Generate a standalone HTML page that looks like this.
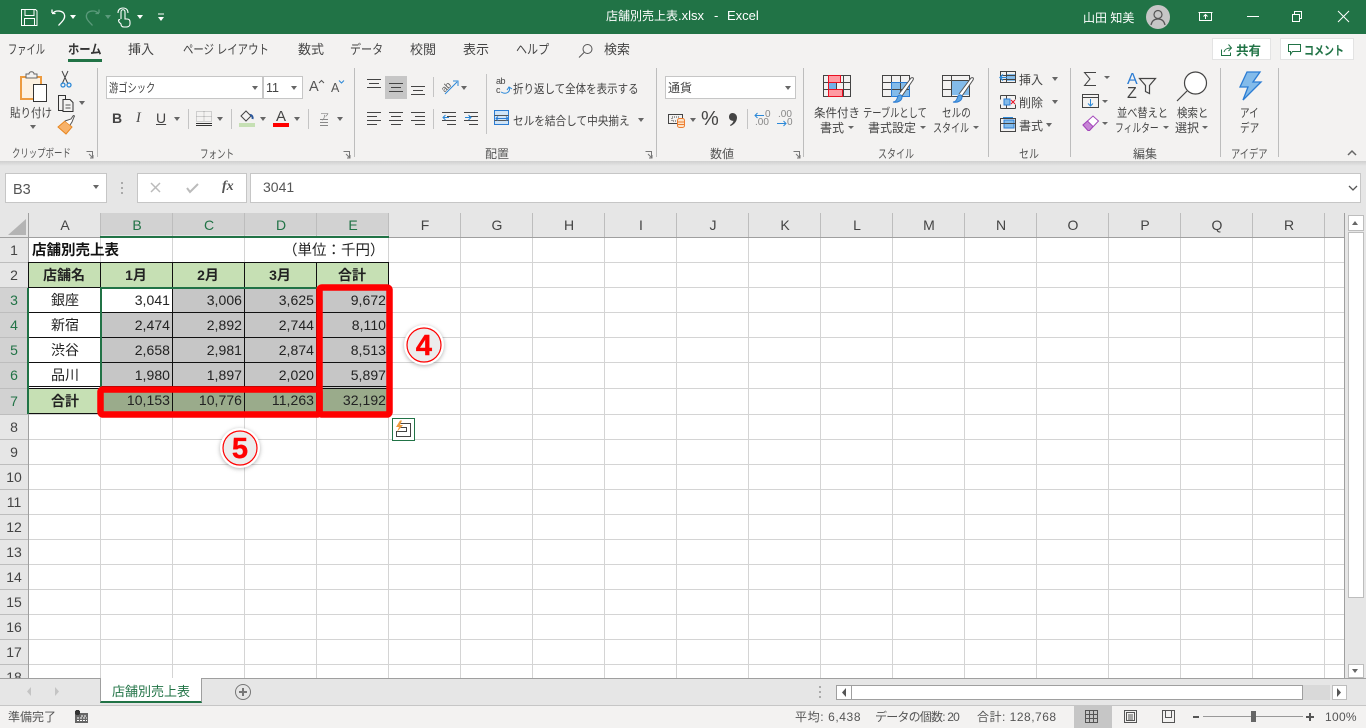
<!DOCTYPE html>
<html lang="ja"><head><meta charset="utf-8"><title>店舗別売上表.xlsx - Excel</title>
<style>
html,body{margin:0;padding:0;width:1366px;height:728px;overflow:hidden;background:#fff}
body{position:relative;font-family:"Liberation Sans","Noto Sans CJK JP",sans-serif;color:#444}
.t{position:absolute;white-space:nowrap;line-height:16px;font-size:12px;color:#444;transform-origin:0 50%}
.b{position:absolute}
svg{position:absolute;overflow:visible}
.tab{font-size:13px;top:42px;color:#444}
.g{font-size:12px;top:146px;color:#555}
.r{font-size:12px;color:#444}
.ch{font-size:14px;top:217px;width:72px;text-align:center;color:#444}
.rh{font-size:14px;left:0;width:28px;text-align:center;color:#444}
.sel{color:#217346}
.n{font-size:14px;color:#222;width:60px;text-align:right;letter-spacing:.05px}
.c{font-size:14px;color:#222;width:72px;text-align:center}
.bd{font-weight:700}
.tri{position:absolute;width:0;height:0;border-left:3.5px solid transparent;border-right:3.5px solid transparent;border-top:4px solid #666}
</style></head><body>
<!-- title bar -->
<div class="b" style="left:0;top:0;width:1366px;height:34px;background:#217346"></div>
<svg style="left:0;top:0" width="1366" height="34" fill="none" stroke="#fff" stroke-width="1">
<path d="M21.500 9.500h14l1.500 1.500v14.500h-15.500zM25 9.500v6h9v-6M24.500 25.500v-7h10v7"/>
<path d="M52 13v-3.500M52 13.500h3.500M52.500 13.500c3-4 11-3 12 1.500 1 4-3 7-6 10.500" stroke-width="1.300"/>
<path d="M99 13v-3.500M99 13.500h-3.500M98.500 13.500c-3-4-11-3-12 1.500-1 4 3 7 6 10.500" stroke="#5b9a7b" stroke-width="1.300"/>
<path d="M121 19V12c0-3 4-3 4 0v7h2c2 0 3 1 3 3v2c0 2-2 3-4 3h-2c-2 0-3-1-3-3l-2-2c-1-2 0-3 1-2M118 13c0-4 3-5 5-5s5 1 5 5" stroke-width="1.100"/>
<path d="M158 14h6" stroke-width="1"/>
</svg>
<div class="tri" style="left:70px;top:15px;border-top-color:#fff"></div>
<div class="tri" style="left:105px;top:15px;border-top-color:#5b9a7b"></div>
<div class="tri" style="left:137px;top:15px;border-top-color:#fff"></div>
<div class="tri" style="left:158px;top:17px;border-top-color:#fff"></div>
<div class="t" style="left:606px;top:8px;font-size:12px;color:#fff">店舗別売上表<span style="font-size:13px">.xlsx</span></div>
<div class="t" style="left:714px;top:8px;font-size:13px;color:#fff">-</div>
<div class="t" style="left:727px;top:8px;font-size:13px;color:#fff">Excel</div>
<div class="t" style="left:1083px;top:10px;font-size:12px;color:#fff">山田 知美</div>
<svg style="left:1146px;top:5px" width="24" height="24"><circle cx="12" cy="12" r="12" fill="#c6c6c6"/><circle cx="12" cy="9.500" r="4" fill="none" stroke="#555" stroke-width="1.200"/><path d="M5 20c1-5 4-6 7-6s6 1 7 6" fill="none" stroke="#555" stroke-width="1.200"/></svg>
<svg style="left:0;top:0" width="1366" height="34" fill="none" stroke="#fff" stroke-width="1">
<path d="M1199.500 12.500h12v8h-12zM1198.500 12.500h14M1205.500 19v-4M1203.500 16.500l2-2 2 2"/>
<path d="M1247 16.500h12"/>
<path d="M1292.500 14.500h7v7h-7zM1294.500 14v-2.500h7v7h-2"/>
<path d="M1338 11l11 11M1349 11l-11 11"/>
</svg>
<!-- ribbon -->
<div class="b" style="left:0;top:34px;width:1366px;height:127px;background:#f3f2f1"></div>
<div class="b" style="left:0;top:161px;width:1366px;height:52px;background:#e6e6e6"></div>
<div class="b" style="left:0;top:161px;width:1366px;height:5px;background:linear-gradient(#cfcfcf,#e6e6e6)"></div>
<div class="t tab" style="left:8px;transform:scaleX(.71)">ファイル</div>
<div class="t tab bd" style="left:68px;color:#333;transform:scaleX(.87)">ホーム</div>
<div class="b" style="left:68px;top:59px;width:34px;height:3px;background:#217346"></div>
<div class="t tab" style="left:128px">挿入</div>
<div class="t tab" style="left:183px;transform:scaleX(.8)">ページ レイアウト</div>
<div class="t tab" style="left:298px">数式</div>
<div class="t tab" style="left:350px;transform:scaleX(.85)">データ</div>
<div class="t tab" style="left:410px">校閲</div>
<div class="t tab" style="left:463px">表示</div>
<div class="t tab" style="left:516px;transform:scaleX(.85)">ヘルプ</div>
<svg style="left:578px;top:43px" width="16" height="16" fill="none" stroke="#555"><circle cx="9.500" cy="6" r="4.500"/><path d="M6 9.500L1 14.500"/></svg>
<div class="t tab" style="left:604px">検索</div>
<!-- share/comment -->
<div class="b" style="left:1212px;top:38px;width:59px;height:22px;background:#fff;border:1px solid #e3e3e3;box-sizing:border-box"></div>
<svg style="left:1218px;top:42px" width="16" height="16" fill="none" stroke="#217346"><path d="M3.500 7.500v6h9v-3M6 10c1-3 3-4 7-4M10.500 2.500l3 3.500-3 3"/></svg>
<div class="t bd" style="left:1236px;top:43px;font-size:12.500px;color:#217346">共有</div>
<div class="b" style="left:1280px;top:38px;width:74px;height:22px;background:#fff;border:1px solid #e3e3e3;box-sizing:border-box"></div>
<svg style="left:1288px;top:43px" width="14" height="14" fill="none" stroke="#217346"><path d="M.5 1.500h12v7h-8l-2 3v-3h-2z"/></svg>
<div class="t bd" style="left:1304px;top:43px;font-size:12.500px;color:#217346;transform:scaleX(.8)">コメント</div>
<!-- group separators -->
<svg style="left:0;top:0" width="1366" height="165" stroke="#c4c4c4" shape-rendering="crispEdges">
<path d="M97.500 68v89M354.500 68v89M656.500 68v89M803.500 68v89M988.500 68v89M1070.500 68v89M1220.500 68v89M1278.500 68v89" stroke="#bdbdbd"/>
<path d="M188.500 109v20M231.500 109v20M308.500 109v20M433.500 77v20M433.500 109v20M486.500 74v60M747.500 109v20"/>
</svg>
<!-- clipboard -->
<svg style="left:15px;top:70px" width="34" height="36">
<path d="M6 7h20v22H6z" fill="#fdf1e0" stroke="#ed9b3f" stroke-width="2"/>
<path d="M11 8V4h3c0-3 5-3 5 0h3v4z" fill="#f3f2f1" stroke="#666"/>
<path d="M18.500 14.500h13v17h-13z" fill="#fff" stroke="#333"/>
</svg>
<div class="t r" style="left:10px;top:105px;transform:scaleX(.875)">貼り付け</div>
<div class="tri" style="left:30px;top:125px"></div>
<svg style="left:58px;top:70px" width="40" height="68" fill="none">
<path d="M4 1l6 13M10 1L4 14" stroke="#444"/><circle cx="5" cy="15" r="2" stroke="#2b88d8" stroke-width="1.300"/><circle cx="11" cy="15" r="2" stroke="#2b88d8" stroke-width="1.300"/>
<path d="M.5 25.500h7v15h-7z" stroke="#333"/><path d="M5 29.500h7l3 3v9H5z" fill="#f3f2f1" stroke="#333"/><path d="M7.500 35h5M7.500 38h5" stroke="#555"/>
<path d="M0 57l7-6 7 6-6 7z" fill="#f7b26a" stroke="#e8861f"/><path d="M7 51l6-2 2-3c1-1 2 0 1 1l-2 5-2 3" fill="#fff" stroke="#555"/>
</svg>
<div class="tri" style="left:79px;top:101px"></div>
<div class="t g" style="left:12px;font-size:11.500px;transform:scaleX(.73)">クリップボード</div>
<svg style="left:86px;top:151px" width="8" height="8" fill="none" stroke="#777"><path d="M.5.500h6v6M3 3l4 4M4 7h3V4"/></svg>
<!-- font -->
<div class="b" style="left:106px;top:76px;width:157px;height:23px;background:#fff;border:1px solid #c6c6c6;box-sizing:border-box"></div>
<div class="t" style="left:109px;top:80px;font-size:12px;color:#444;transform:scaleX(.77)">游ゴシック</div>
<div class="tri" style="left:252px;top:86px"></div>
<div class="b" style="left:263px;top:76px;width:40px;height:23px;background:#fff;border:1px solid #c6c6c6;box-sizing:border-box"></div>
<div class="t" style="left:266px;top:80px;font-size:12.500px;color:#444">11</div>
<div class="tri" style="left:291px;top:86px"></div>
<div class="t" style="left:309px;top:79px;font-size:14.500px;color:#555">A</div>
<div class="t" style="left:331px;top:80px;font-size:12.500px;color:#555">A</div>
<svg style="left:317px;top:79px" width="27" height="6" fill="none" stroke-width="1"><path d="M2 4l2.500-2.500L7 4" stroke="#555"/><path d="M22 1.500l2.500 2.500L27 1.500" stroke="#2b88d8"/></svg>
<div class="t bd" style="left:112px;top:110px;font-size:14px;color:#444">B</div>
<div class="t" style="left:136px;top:110px;font-size:14.500px;font-style:italic;font-family:'Liberation Serif',serif;color:#444">I</div>
<div class="t" style="left:156px;top:110px;font-size:14px;color:#444;text-decoration:underline">U</div>
<div class="tri" style="left:174px;top:117px"></div>
<svg style="left:196px;top:111px" width="17" height="17" fill="none" shape-rendering="crispEdges"><path d="M.5.500h15v10H.5zM8 .5v10M.5 5.500h15" stroke="#aaa" stroke-dasharray="1 1"/><path d="M0 12.500h16" stroke="#333"/><path d="M0 14.500h16" stroke="#333"/></svg>
<div class="tri" style="left:217px;top:117px"></div>
<svg style="left:239px;top:109px" width="17" height="19"><path d="M2 7l5-5 5 5-5 5z" fill="#f3f2f1" stroke="#444"/><path d="M11 6c2 0 3 2 2.500 4" stroke="#2b579a" stroke-width="2" fill="none"/><rect y="14" width="16" height="4" fill="#c6e0b4"/></svg>
<div class="tri" style="left:260px;top:117px"></div>
<div class="t" style="left:276px;top:109px;font-size:15px;color:#444">A</div>
<div class="b" style="left:273px;top:123px;width:16px;height:4px;background:#f00"></div>
<div class="tri" style="left:294px;top:117px"></div>
<div class="t" style="left:320px;top:109px;font-size:9px;color:#888">ア</div>
<svg style="left:319px;top:119px" width="12" height="9" stroke="#888" fill="none"><path d="M1 .5h8M1 3.500h8M1 6.500h8" stroke-width="1"/></svg>
<div class="tri" style="left:337px;top:117px"></div>
<div class="t g" style="left:200px;transform:scaleX(.71)">フォント</div>
<svg style="left:343px;top:151px" width="8" height="8" fill="none" stroke="#777"><path d="M.5.500h6v6M3 3l4 4M4 7h3V4"/></svg>
<!-- alignment -->
<div class="b" style="left:385px;top:76px;width:22px;height:23px;background:#c6c6c6"></div>
<svg style="left:360px;top:70px" width="130" height="60" fill="none" stroke="#444" shape-rendering="crispEdges">
<path d="M7 9.500h14M9 13.500h10M7 17.500h14"/>
<path d="M29 13.500h14M31 17.500h10M29 21.500h14"/>
<path d="M51 16.500h14M53 20.500h10M51 24.500h14"/>
<path d="M7 42.500h14M7 46.500h10M7 50.500h14M7 54.500h10"/>
<path d="M29 42.500h14M31 46.500h10M29 50.500h14M31 54.500h10"/>
<path d="M51 42.500h14M55 46.500h10M51 50.500h14M55 54.500h10"/>
<path d="M82 42.500h14M87 46.500h9M82 50.500h14M87 54.500h9"/>
<path d="M104 42.500h14M109 46.500h9M104 50.500h14M109 54.500h9"/>
</svg>
<div class="t" style="left:441px;top:79px;font-size:9px;color:#555;transform:rotate(-45deg);transform-origin:50% 50%">ab</div>
<svg style="left:440px;top:78px" width="20" height="18" fill="none"><path d="M5 16L17 4M13 3h5v5" stroke="#2b88d8"/></svg>
<div class="tri" style="left:461px;top:86px"></div>
<svg style="left:442px;top:113px" width="42" height="12" fill="none" stroke="#2b88d8"><path d="M1 4.500h6M3.500 2L1 4.500 3.500 7"/><path d="M23 4.500h6M26.500 2L29 4.500 26.500 7"/></svg>
<svg style="left:496px;top:79px" width="18" height="18" fill="none"><path d="M5 13c5 3 10 0 8-5M11 11l2-3 3 2" stroke="#2b88d8"/></svg>
<div class="t" style="left:496px;top:77px;font-size:9px;color:#444;line-height:9px;letter-spacing:-.5px">ab<br>c</div>
<div class="t r" style="left:513px;top:81px;transform:scaleX(.875)">折り返して全体を表示する</div>
<svg style="left:494px;top:110px" width="16" height="17" fill="#cfe4f7" stroke="#2b7cd3" shape-rendering="crispEdges"><path d="M.5.500h14v14H.5z"/><path d="M.5 5.500h14M.5 10.500h14" stroke="#555" fill="none"/></svg>
<svg style="left:496px;top:116px" width="12" height="5" fill="none" stroke="#2b7cd3"><path d="M0 2.500h12M2 0.500l-2 2 2 2M10 .5l2 2-2 2"/></svg>
<div class="t r" style="left:513px;top:113px;transform:scaleX(.886)">セルを結合して中央揃え</div>
<div class="tri" style="left:638px;top:118px"></div>
<div class="t g" style="left:485px">配置</div>
<svg style="left:645px;top:151px" width="8" height="8" fill="none" stroke="#777"><path d="M.5.500h6v6M3 3l4 4M4 7h3V4"/></svg>
<!-- number -->
<div class="b" style="left:665px;top:76px;width:131px;height:23px;background:#fff;border:1px solid #c6c6c6;box-sizing:border-box"></div>
<div class="t" style="left:668px;top:80px;font-size:12px;color:#444">通貨</div>
<div class="tri" style="left:785px;top:86px"></div>
<svg style="left:668px;top:112px" width="18" height="16" fill="none"><path d="M.5 2.500h14v9H.5z" stroke="#444"/><path d="M4 5h7v4H4z" stroke="#444" stroke-dasharray="1 1"/><rect x="9.500" y="6.500" width="7" height="9" rx="2" fill="#fce4c8" stroke="#ed7d31"/><path d="M10 10h6M10 12.500h6" stroke="#ed7d31"/></svg>
<div class="tri" style="left:690px;top:118px"></div>
<div class="t" style="left:701px;top:111px;font-size:20px;color:#444">%</div>
<svg style="left:728px;top:112px" width="10" height="15"><path d="M4.500 1C7 1 9 3 9 5.500 9 9 6.500 12.500 2.500 14l-.5-1c2-1 3-2.500 3.500-4.200C3 9 1 7.500 1 5S2.500 1 4.500 1z" fill="#444"/></svg>
<div class="t" style="left:765px;top:107px;font-size:10px;color:#888">0</div>
<div class="t" style="left:755px;top:115px;font-size:10px;color:#888">.00</div>
<div class="t" style="left:778px;top:107px;font-size:10px;color:#888">.00</div>
<div class="t" style="left:787px;top:115px;font-size:10px;color:#888">0</div>
<svg style="left:754px;top:112px" width="44" height="16" fill="none" stroke="#2b88d8"><path d="M1 3.500h9M3.500 1L1 3.500 3.500 6"/><path d="M23 11.500h9M29.500 9l2.500 2.500-2.500 2.500"/></svg>
<div class="t g" style="left:710px">数値</div>
<svg style="left:793px;top:151px" width="8" height="8" fill="none" stroke="#777"><path d="M.5.500h6v6M3 3l4 4M4 7h3V4"/></svg>
<!-- styles -->
<svg style="left:823px;top:75px" width="28" height="22" shape-rendering="crispEdges"><rect x="5" y="0" width="13" height="7" fill="#ff9aa2"/><rect x="5" y="7" width="8" height="7" fill="#73b0e8"/><rect x="5" y="14" width="15" height="7" fill="#ff9aa2"/><path d="M.5.500h27v21H.5zM13.500 7v7M20.500.5v21M.5 7.500h5M18 7.500h9M.5 14.500h5M20 14.500h7" fill="none" stroke="#444"/><path d="M5.500.5h12v7h-12zM5.500 14.500h14v7h-14zM5.500 7v7" fill="none" stroke="#e81123"/></svg>
<svg style="left:882px;top:75px" width="32" height="32"><rect x="9" y="7" width="19" height="14" fill="#83bbea"/><path d="M.5.500h27v21H.5zM9.500.5v21M18.500.5v21M.5 7.500h27M.5 14.500h27" fill="none" stroke="#444" shape-rendering="crispEdges"/><path d="M9.500 7.500h18v14h-18z" fill="none" stroke="#2b7cd3" shape-rendering="crispEdges"/><path d="M17 19L29 3c2-1 3 0 2 2L20 21" fill="#fff" stroke="#555"/><path d="M11 27c3 0 4-3 5-6 2-2 4-1 4 1 0 4-5 6-9 5z" fill="#5ea5e2" stroke="#2b7cd3"/></svg>
<svg style="left:942px;top:75px" width="32" height="32"><rect x="10" y="5" width="18" height="15" fill="#83bbea"/><path d="M.5.500h27v21H.5zM.5 5.500h27M9.500.5v21M.5 14.500h9" fill="none" stroke="#444" shape-rendering="crispEdges"/><path d="M17 19L29 3c2-1 3 0 2 2L20 21" fill="#fff" stroke="#555"/><path d="M11 27c3 0 4-3 5-6 2-2 4-1 4 1 0 4-5 6-9 5z" fill="#5ea5e2" stroke="#2b7cd3"/></svg>
<div class="t r" style="left:814px;top:105px;transform:scaleX(.96)">条件付き</div>
<div class="t r" style="left:820px;top:120px">書式</div>
<div class="tri" style="left:848px;top:126px;border-width:3px 3px 0"></div>
<div class="t r" style="left:863px;top:105px;transform:scaleX(.77)">テーブルとして</div>
<div class="t r" style="left:868px;top:120px">書式設定</div>
<div class="tri" style="left:920px;top:126px;border-width:3px 3px 0"></div>
<div class="t r" style="left:942px;top:105px;transform:scaleX(.8)">セルの</div>
<div class="t r" style="left:933px;top:120px;transform:scaleX(.75)">スタイル</div>
<div class="tri" style="left:973px;top:126px;border-width:3px 3px 0"></div>
<div class="t g" style="left:878px;transform:scaleX(.75)">スタイル</div>
<!-- cells -->
<svg style="left:1000px;top:71px" width="18" height="62" shape-rendering="crispEdges" fill="none"><rect x="6" y="3" width="10" height="7" fill="#83bbea"/><path d="M.5.500h15v11H.5zM.5 4.500h15M.5 8.500h15M6.500.5v11" stroke="#444"/><path d="M0 6.500h7M3 3.500l-3 3 3 3" stroke="#2b88d8" stroke-width="1.300" shape-rendering="auto"/>
<path d="M.5 24.500h15M.5 37.500h15M.5 24.500v4M.5 33.500v4M15.500 24.500v4M15.500 33.500v4M6.500 24.500v4M6.500 33.500v4" stroke="#444"/><rect x="4" y="28" width="6" height="6" fill="#83bbea" stroke="#2b7cd3"/><path d="M11 29l4 4M15 29l-4 4" stroke="#e81123" shape-rendering="auto"/>
<rect x="4" y="49" width="10" height="8" fill="#83bbea" stroke="#2b7cd3"/><path d="M.5 47.500h15v13H.5zM.5 52.500h15" stroke="#444"/><path d="M3 46.500h10" stroke="#2b88d8"/></svg>
<div class="t r" style="left:1019px;top:72px">挿入</div><div class="tri" style="left:1052px;top:77px"></div>
<div class="t r" style="left:1019px;top:95px">削除</div><div class="tri" style="left:1052px;top:100px"></div>
<div class="t r" style="left:1019px;top:118px">書式</div><div class="tri" style="left:1046px;top:123px"></div>
<div class="t g" style="left:1019px;transform:scaleX(.83)">セル</div>
<!-- editing -->
<svg style="left:1082px;top:70px" width="20" height="64" fill="none"><path d="M13 2.500H1.500L7 9l-5.500 6.500H13" stroke="#444" transform="translate(1,0)"/><path d="M.5 24.500h16v13H.5z" stroke="#444" shape-rendering="crispEdges"/><path d="M.5 27.500h16" stroke="#444" shape-rendering="crispEdges"/><path d="M8.500 29v7M6 33.500l2.500 2.500 2.500-2.500" stroke="#2b88d8"/><path d="M1 55l10-9 5.500 5-9 9.500H6z" fill="#fff" stroke="#a347ba"/><path d="M1 55l4.500-4 5.500 5.500-3.500 4H6z" fill="#c785d6" stroke="#a347ba"/></svg>
<div class="tri" style="left:1104px;top:76px;border-width:3px 3px 0"></div>
<div class="tri" style="left:1102px;top:100px;border-width:3px 3px 0"></div>
<div class="tri" style="left:1102px;top:122px;border-width:3px 3px 0"></div>
<div class="t" style="left:1127px;top:72px;font-size:16px;color:#2b7cd3">A</div>
<div class="t" style="left:1127px;top:86px;font-size:16px;color:#444">Z</div>
<svg style="left:1139px;top:78px" width="18" height="17" fill="none" stroke="#444"><path d="M.5.500h16l-6 7v8l-4-2v-6z" stroke-width="1.200"/></svg>
<svg style="left:1176px;top:71px" width="32" height="32" fill="none" stroke="#444"><circle cx="19.500" cy="12" r="11" fill="#fff" stroke-width="1.200"/><path d="M11 20L1 30" stroke-width="1.200"/></svg>
<div class="t r" style="left:1117px;top:105px;transform:scaleX(.85)">並べ替えと</div>
<div class="t r" style="left:1115px;top:120px;transform:scaleX(.73)">フィルター</div>
<div class="tri" style="left:1163px;top:126px;border-width:3px 3px 0"></div>
<div class="t r" style="left:1177px;top:105px;transform:scaleX(.87)">検索と</div>
<div class="t r" style="left:1175px;top:120px">選択</div>
<div class="tri" style="left:1202px;top:126px;border-width:3px 3px 0"></div>
<div class="t g" style="left:1133px">編集</div>
<!-- ideas -->
<svg style="left:1238px;top:71px" width="24" height="30"><path d="M9 1h13l-7 10h8L5 29l5-13H2z" fill="#83bbea" stroke="#2b7cd3" stroke-width="1.300"/></svg>
<div class="t r" style="left:1240px;top:105px;transform:scaleX(.8)">アイ</div>
<div class="t r" style="left:1240px;top:120px;transform:scaleX(.8)">デア</div>
<div class="t g" style="left:1231px;transform:scaleX(.77)">アイデア</div>
<svg style="left:1346px;top:149px" width="12" height="8" fill="none" stroke="#666" stroke-width="1.500"><path d="M2 6l4-4 4 4"/></svg>
<!-- formula bar -->
<div class="b" style="left:5px;top:173px;width:102px;height:30px;background:#fff;border:1px solid #c6c6c6;box-sizing:border-box"></div>
<div class="t" style="left:13px;top:182px;font-size:14.500px;color:#555">B3</div>
<div class="tri" style="left:93px;top:185px"></div>
<svg style="left:121px;top:182px" width="3" height="12" fill="#aaa"><rect width="2" height="2"/><rect y="5" width="2" height="2"/><rect y="10" width="2" height="2"/></svg>
<div class="b" style="left:137px;top:173px;width:110px;height:30px;background:#fff;border:1px solid #c6c6c6;box-sizing:border-box"></div>
<svg style="left:150px;top:182px" width="50" height="12" fill="none" stroke="#bbb" stroke-width="1.500"><path d="M1 1l9 9M10 1l-9 9"/><path d="M37 6l3 4 8-8" stroke-width="2"/></svg>
<div class="t" style="left:222px;top:179px;font-size:14px;font-style:italic;font-weight:700;font-family:'Liberation Serif',serif;color:#555">fx</div>
<div class="b" style="left:250px;top:173px;width:1111px;height:30px;background:#fff;border:1px solid #c6c6c6;box-sizing:border-box"></div>
<div class="t" style="left:263px;top:179px;font-size:14px;color:#555">3041</div>
<svg style="left:1348px;top:185px" width="10" height="6" fill="none" stroke="#555" stroke-width="1.300"><path d="M1 1l4 4 4-4"/></svg>
<!-- grid -->
<svg style="left:0;top:213px" width="1345" height="465" shape-rendering="crispEdges">
<rect x="0" y="0" width="1345" height="24" fill="#e6e6e6"/>
<rect x="0" y="0" width="28" height="465" fill="#e6e6e6"/>
<rect x="101" y="0" width="288" height="22" fill="#d2d2d2"/>
<rect x="0" y="75" width="28" height="126" fill="#d2d2d2"/>
<path d="M100.500 25v440M172.500 25v440M244.500 25v440M316.500 25v440M388.500 25v440M460.500 25v440M532.500 25v440M604.500 25v440M676.500 25v440M748.500 25v440M820.500 25v440M892.500 25v440M964.500 25v440M1036.500 25v440M1108.500 25v440M1180.500 25v440M1252.500 25v440M1324.500 25v440" stroke="#d4d4d4"/>
<path d="M0 49.500h1345M0 74.500h1345M0 99.500h1345M0 124.500h1345M0 149.500h1345M0 175.500h1345M0 201.500h1345M0 226.500h1345M0 251.500h1345M0 276.500h1345M0 301.500h1345M0 326.500h1345M0 351.500h1345M0 376.500h1345M0 401.500h1345M0 426.500h1345M0 451.500h1345" stroke="#d4d4d4"/>
<path d="M100.500 0v24M172.500 0v24M244.500 0v24M316.500 0v24M388.500 0v24M460.500 0v24M532.500 0v24M604.500 0v24M676.500 0v24M748.500 0v24M820.500 0v24M892.500 0v24M964.500 0v24M1036.500 0v24M1108.500 0v24M1180.500 0v24M1252.500 0v24M1324.500 0v24" stroke="#bdbdbd"/>
<path d="M0 24.500h1345M28.500 0v465" stroke="#9f9f9f"/>
<path d="M0 49.500h28M0 74.500h28M0 99.500h28M0 124.500h28M0 149.500h28M0 175.500h28M0 201.500h28M0 226.500h28M0 251.500h28M0 276.500h28M0 301.500h28M0 326.500h28M0 351.500h28M0 376.500h28M0 401.500h28M0 426.500h28M0 451.500h28" stroke="#bdbdbd"/>
<path d="M8 22L26 6v16z" fill="#b4b4b4" shape-rendering="auto"/>
<rect x="100" y="23" width="289" height="2" fill="#217346"/>
<!-- white title row -->
<rect x="29" y="25" width="71" height="24" fill="#fff"/><rect x="101" y="25" width="71" height="24" fill="#fff"/><rect x="245" y="25" width="143" height="24" fill="#fff"/>
<!-- table -->
<rect x="29" y="50" width="360" height="24" fill="#c6e0b4"/>
<rect x="29" y="176" width="72" height="25" fill="#c6e0b4"/>
<rect x="102" y="75" width="286" height="125" fill="#c6c6c6"/>
<rect x="102" y="76" width="70" height="24" fill="#fff"/>
<rect x="29" y="75" width="71" height="100" fill="#fff"/>
<rect x="101" y="176" width="288" height="25" fill="#9aab8b"/>
<path d="M28 49.500h361M28 74.500h361M28 99.500h361M28 124.500h361M28 149.500h361M28 173.500h361M28 175.500h361M28 200.500h361M100.500 49v152M172.500 49v152M244.500 49v152M316.500 49v152M388.500 49v152M28.500 49v152" stroke="#111"/>
<path d="M100.500 75v100M101.500 75v100M100 74.500h217M100 75.500h217M28.500 75v126M27.500 75v126" stroke="#217346"/>
</svg>
<div class="t ch" style="left:29px">A</div><div class="t ch sel" style="left:101px">B</div><div class="t ch sel" style="left:173px">C</div><div class="t ch sel" style="left:245px">D</div><div class="t ch sel" style="left:317px">E</div>
<div class="t ch" style="left:389px">F</div><div class="t ch" style="left:461px">G</div><div class="t ch" style="left:533px">H</div><div class="t ch" style="left:605px">I</div><div class="t ch" style="left:677px">J</div><div class="t ch" style="left:749px">K</div><div class="t ch" style="left:821px">L</div><div class="t ch" style="left:893px">M</div><div class="t ch" style="left:965px">N</div><div class="t ch" style="left:1037px">O</div><div class="t ch" style="left:1109px">P</div><div class="t ch" style="left:1181px">Q</div><div class="t ch" style="left:1253px">R</div>
<div class="t rh" style="top:242px">1</div><div class="t rh" style="top:267px">2</div><div class="t rh sel" style="top:292px">3</div><div class="t rh sel" style="top:317px">4</div><div class="t rh sel" style="top:342px">5</div><div class="t rh sel" style="top:367px">6</div><div class="t rh sel" style="top:393px">7</div><div class="t rh" style="top:419px">8</div><div class="t rh" style="top:444px">9</div><div class="t rh" style="top:469px">10</div><div class="t rh" style="top:494px">11</div><div class="t rh" style="top:519px">12</div><div class="t rh" style="top:544px">13</div><div class="t rh" style="top:569px">14</div><div class="t rh" style="top:594px">15</div><div class="t rh" style="top:619px">16</div><div class="t rh" style="top:644px">17</div>
<div class="b" style="left:0;top:664px;width:28px;height:14px;overflow:hidden"><div class="t rh" style="top:5px">18</div></div>
<div class="t bd" style="left:32px;top:243px;font-size:14.500px;color:#111">店舗別売上表</div>
<div class="t" style="left:283px;top:243px;font-size:14.500px;color:#222">（単位：千円）</div>
<div class="t c bd" style="left:28px;top:267px">店舗名</div><div class="t c bd" style="left:100px;top:267px">1月</div><div class="t c bd" style="left:172px;top:267px">2月</div><div class="t c bd" style="left:244px;top:267px">3月</div><div class="t c bd" style="left:316px;top:267px">合計</div>
<div class="t c" style="left:29px;top:292px">銀座</div><div class="t c" style="left:29px;top:317px">新宿</div><div class="t c" style="left:29px;top:342px">渋谷</div><div class="t c" style="left:29px;top:367px">品川</div><div class="t c bd" style="left:29px;top:393px">合計</div>
<div class="t n" style="left:110px;top:292px">3,041</div><div class="t n" style="left:182px;top:292px">3,006</div><div class="t n" style="left:254px;top:292px">3,625</div><div class="t n" style="left:326px;top:292px">9,672</div>
<div class="t n" style="left:110px;top:317px">2,474</div><div class="t n" style="left:182px;top:317px">2,892</div><div class="t n" style="left:254px;top:317px">2,744</div><div class="t n" style="left:326px;top:317px">8,110</div>
<div class="t n" style="left:110px;top:342px">2,658</div><div class="t n" style="left:182px;top:342px">2,981</div><div class="t n" style="left:254px;top:342px">2,874</div><div class="t n" style="left:326px;top:342px">8,513</div>
<div class="t n" style="left:110px;top:367px">1,980</div><div class="t n" style="left:182px;top:367px">1,897</div><div class="t n" style="left:254px;top:367px">2,020</div><div class="t n" style="left:326px;top:367px">5,897</div>
<div class="t n" style="left:110px;top:392px">10,153</div><div class="t n" style="left:182px;top:392px">10,776</div><div class="t n" style="left:254px;top:392px">11,263</div><div class="t n" style="left:326px;top:392px">32,192</div>
<!-- red annotations -->
<svg style="left:0;top:0" width="1366" height="728" fill="none" stroke="#f00" stroke-width="6.500">
<rect x="100.500" y="389.500" width="219" height="25" rx="2.500"/>
<rect x="319.500" y="287.500" width="70" height="127" rx="2.500"/>
</svg>
<!-- quick analysis -->
<svg style="left:392px;top:418px" width="24" height="24"><rect x=".5" y=".5" width="22" height="22" fill="#fff" stroke="#217346"/><path d="M8.500 5.500h10v13H4.500v-5h10v-4h-7" fill="none" stroke="#444"/><path d="M8 2.500L4 9h3l-2 5 6-7H8l2-4.500z" fill="#ed9b3f"/></svg>
<!-- circled numbers -->
<svg style="left:402px;top:323px;filter:drop-shadow(0 1px 2px rgba(0,0,0,.3))" width="44" height="44"><circle cx="22" cy="22" r="20" fill="#fff"/><circle cx="22" cy="22" r="17" fill="#ececec" stroke="#f00" stroke-width="1.200"/><text x="22" y="32" text-anchor="middle" font-size="29" font-weight="700" fill="#f00" font-family="Liberation Sans" stroke="#f00" stroke-width=".4">4</text></svg>
<svg style="left:218px;top:426px;filter:drop-shadow(0 1px 2px rgba(0,0,0,.3))" width="44" height="44"><circle cx="22" cy="22" r="20" fill="#fff"/><circle cx="22" cy="22" r="17" fill="#ececec" stroke="#f00" stroke-width="1.200"/><text x="22" y="32" text-anchor="middle" font-size="29" font-weight="700" fill="#f00" font-family="Liberation Sans" stroke="#f00" stroke-width=".4">5</text></svg>
<!-- vertical scrollbar -->
<div class="b" style="left:1344px;top:213px;width:22px;height:465px;background:#e6e6e6;border-left:1px solid #9f9f9f;box-sizing:border-box"></div>
<div class="b" style="left:1348px;top:215px;width:16px;height:16px;background:#fff;border:1px solid #bdbdbd;box-sizing:border-box"></div>
<div class="tri" style="left:1352px;top:221px;border-top:0;border-bottom:4px solid #666"></div>
<div class="b" style="left:1348px;top:232px;width:16px;height:366px;background:#fff;border:1px solid #bdbdbd;box-sizing:border-box"></div>
<div class="b" style="left:1348px;top:664px;width:16px;height:14px;background:#fff;border:1px solid #bdbdbd;box-sizing:border-box"></div>
<div class="tri" style="left:1352px;top:669px"></div>
<!-- sheet tabs -->
<div class="b" style="left:0;top:678px;width:1366px;height:28px;background:#e6e6e6;border-top:1px solid #9f9f9f;border-bottom:1px solid #c6c6c6;box-sizing:border-box"></div>
<div class="b" style="left:100px;top:678px;width:102px;height:25px;background:#fff;border-left:1px solid #9f9f9f;border-right:1px solid #9f9f9f;border-bottom:2px solid #217346;box-sizing:border-box"></div>
<div class="t" style="left:112px;top:684px;font-size:13px;color:#217346">店舗別売上表</div>
<svg style="left:26px;top:687px" width="36" height="10" fill="#c4c4c4"><path d="M5 0L1 4.500 5 9zM29 0l4 4.500-4 4.500z"/></svg>
<svg style="left:235px;top:684px" width="17" height="17" fill="none" stroke="#777"><circle cx="8" cy="8" r="7.500"/><path d="M4 8h8M8 4v8" stroke-width="2"/></svg>
<svg style="left:819px;top:686px" width="3" height="14" fill="#aaa"><rect width="2" height="2"/><rect y="5" width="2" height="2"/><rect y="10" width="2" height="2"/></svg>
<div class="b" style="left:836px;top:685px;width:494px;height:15px;background:#d9d9d9"></div>
<div class="b" style="left:836px;top:685px;width:16px;height:15px;background:#fff;border:1px solid #9f9f9f;box-sizing:border-box"></div>
<div class="b" style="left:851px;top:685px;width:452px;height:15px;background:#fff;border:1px solid #9f9f9f;box-sizing:border-box"></div>
<div class="b" style="left:1332px;top:685px;width:15px;height:15px;background:#fff;border:1px solid #bdbdbd;box-sizing:border-box"></div>
<svg style="left:0;top:688px" width="1366" height="10" fill="#555"><path d="M846 0l-4 4.500 4 4.500zM1337 0l4 4.500-4 4.500z"/></svg>
<!-- status bar -->
<div class="b" style="left:0;top:706px;width:1366px;height:22px;background:#f3f2f1"></div>
<div class="t" style="left:8px;top:709px;font-size:12px;color:#555">準備完了</div>
<svg style="left:75px;top:710px" width="14" height="14" shape-rendering="crispEdges"><rect x="0" y="3" width="13" height="10" fill="#666"/><rect x="0" y="0" width="5" height="5" rx="2" fill="#333"/><path d="M6 6h6M2 8h10M2 10.500h10" stroke="#fff" stroke-dasharray="2 1"/></svg>
<div class="t" style="left:795px;top:709px;font-size:12px;color:#555;letter-spacing:.6px">平均: 6,438</div>
<div class="t" style="left:875px;top:709px;font-size:12px;color:#555;letter-spacing:-.8px">データの個数: 20</div>
<div class="t" style="left:977px;top:709px;font-size:12px;color:#555;letter-spacing:.5px">合計: 128,768</div>
<div class="b" style="left:1074px;top:706px;width:38px;height:22px;background:#c6c6c6"></div>
<svg style="left:1085px;top:710px" width="100" height="14" fill="none" stroke="#555" shape-rendering="crispEdges"><path d="M.5.500h12v12H.5zM4.500.5v12M8.500.5v12M.5 4.500h12M.5 8.500h12"/><path d="M39.500.5h12v12h-12zM41.500 2.500h8v8h-8zM43 5h5M43 7h5M43 9h5"/><path d="M77.500.5h12v12h-12zM80.500.5v7h6v-7"/></svg>
<div class="b" style="left:1193px;top:716px;width:6px;height:2px;background:#555"></div>
<div class="b" style="left:1203px;top:716px;width:100px;height:1px;background:#999"></div>
<div class="b" style="left:1251px;top:711px;width:5px;height:11px;background:#666"></div>
<div class="b" style="left:1306px;top:716px;width:8px;height:2px;background:#555"></div>
<div class="b" style="left:1309px;top:713px;width:2px;height:8px;background:#555"></div>
<div class="t" style="left:1325px;top:709px;font-size:12px;color:#555;letter-spacing:.3px">100%</div>
</body></html>
